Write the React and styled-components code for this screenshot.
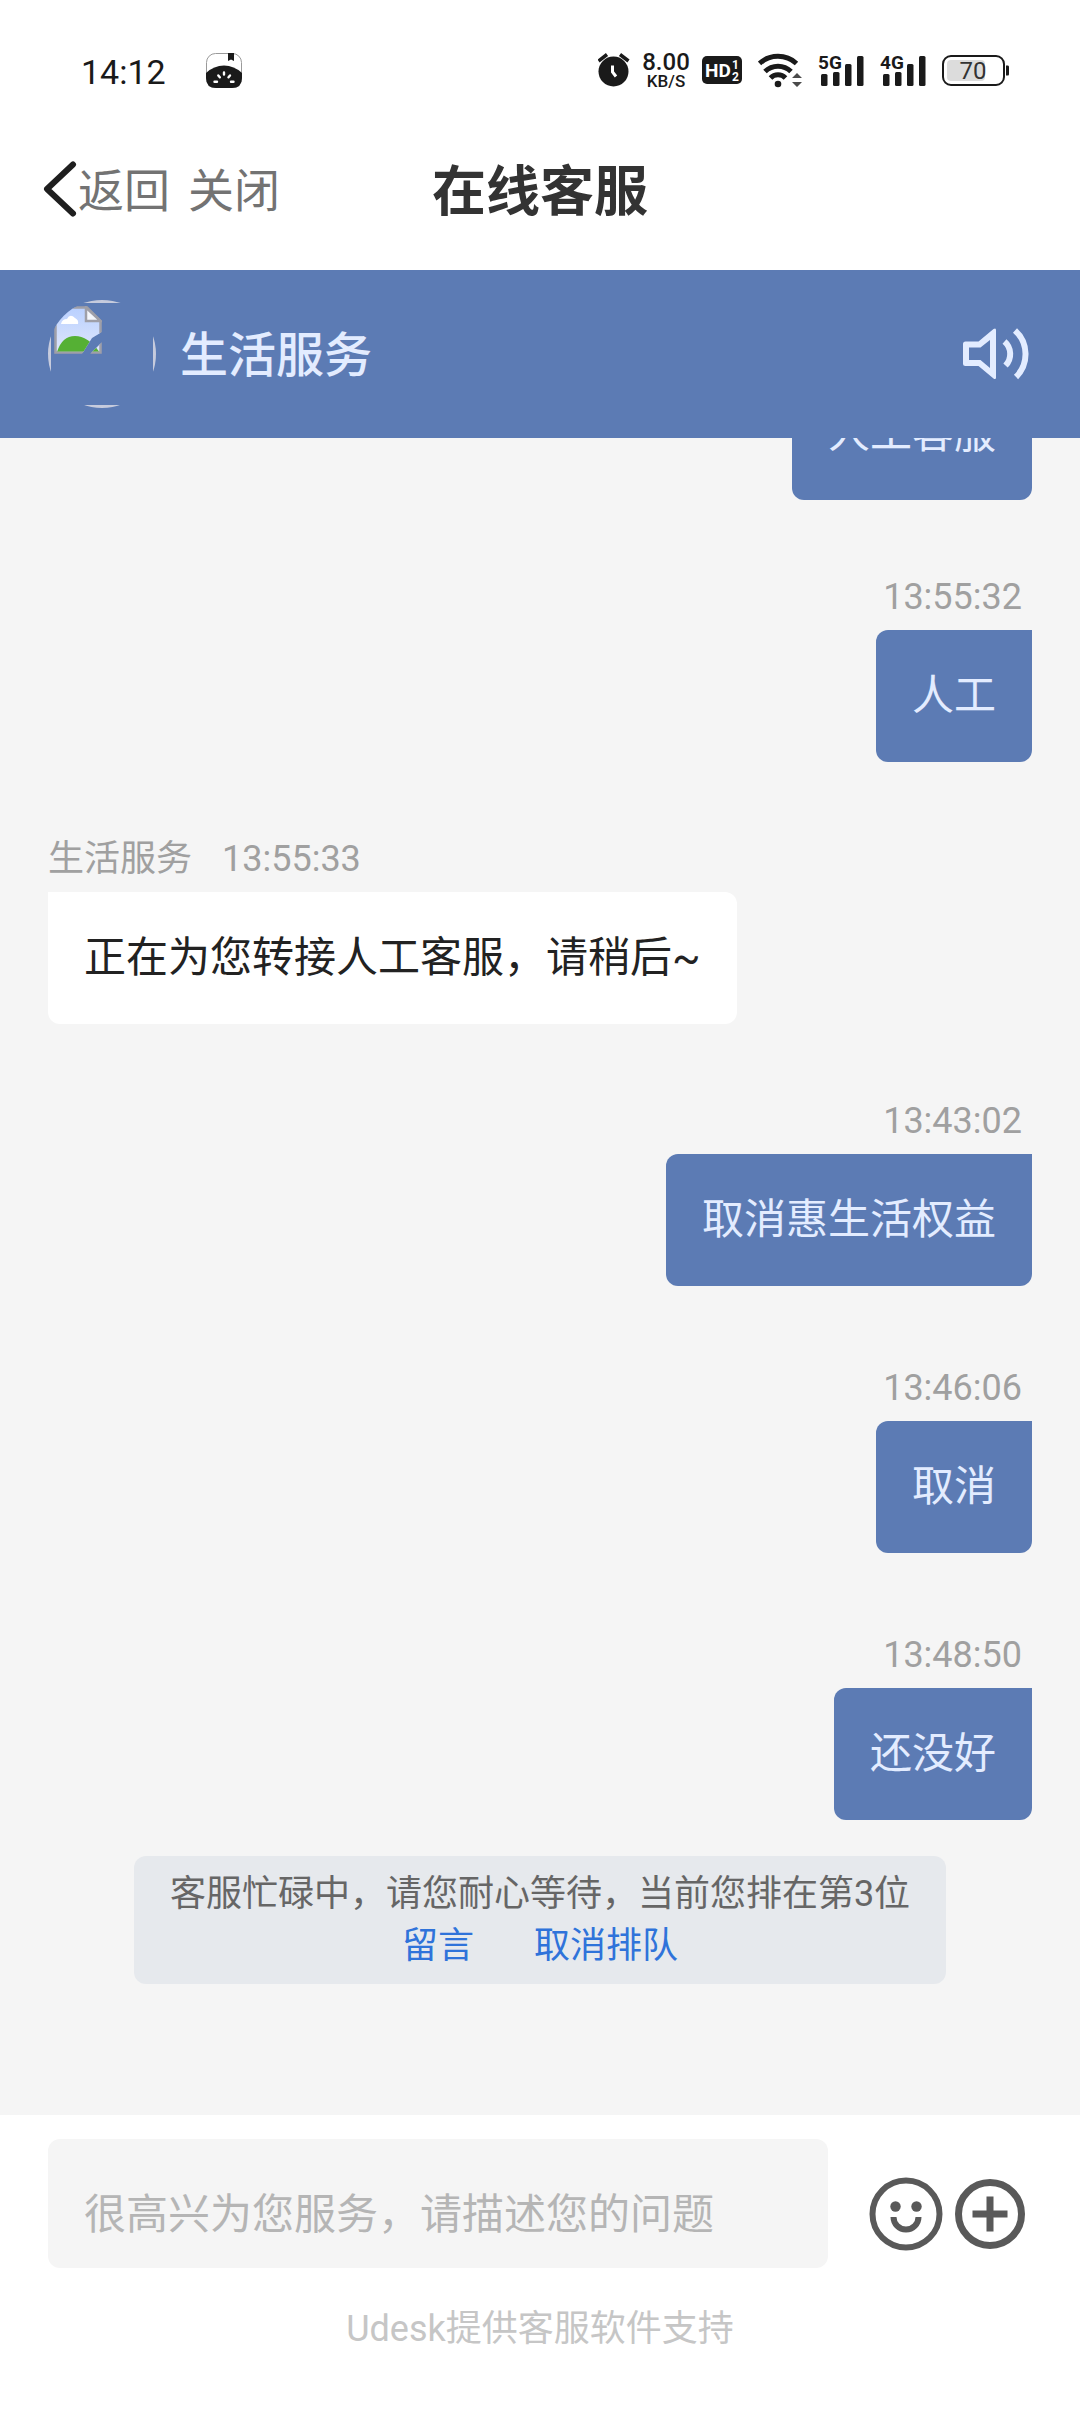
import React, { useState } from 'react';
import styled, { createGlobalStyle } from 'styled-components';

const colors = {
  primary: '#5c7bb4',
  onPrimary: '#e3ecff',
  background: '#f5f5f5',
  surface: '#ffffff',
  ink: '#1a1a1a',
  text: '#222222',
  muted: '#a0a0a0',
  link: '#2f73da'
};

const GlobalStyle = createGlobalStyle`
  * {
    box-sizing: border-box;
  }

  body {
    margin: 0;
    background: ${colors.surface};
    font-family: Roboto, 'Noto Sans CJK SC', sans-serif;
    color: ${colors.text};
  }

  button,
  textarea {
    font: inherit;
    border: none;
    background: none;
    padding: 0;
    margin: 0;
  }

  svg {
    display: block;
    flex: none;
  }
`;

const Page = styled.div`
  height: 100vh;
  display: flex;
  flex-direction: column;
`;

const StatusBar = styled.div`
  height: 140px;
  flex: none;
  display: flex;
  align-items: center;
  justify-content: space-between;
  padding: 0 71px 0 81px;
  color: ${colors.ink};
`;

const StatusGroup = styled.div`
  display: flex;
  align-items: center;
  gap: ${props => props.$gap}px;
`;

const Clock = styled.span`
  padding-top: 4px;
  font-size: 34px;
  line-height: 48px;
`;

const NetSpeed = styled.div`
  width: 52px;
  display: flex;
  flex-direction: column;
  align-items: center;
  font-weight: 500;
`;

const NetValue = styled.span`
  font-size: 24px;
  line-height: 22px;
`;

const NetUnit = styled.span`
  font-size: 17px;
  line-height: 17px;
`;

const NavBar = styled.nav`
  height: 130px;
  flex: none;
  display: grid;
  grid-template-columns: 1fr auto 1fr;
  align-items: center;
  padding: 0 42px 28px;
`;

const NavActions = styled.div`
  display: flex;
  align-items: center;
  gap: 18px;
`;

const NavButton = styled.button`
  display: flex;
  align-items: center;
  font-size: 46px;
  line-height: 60px;
  color: #737373;
  cursor: pointer;
`;

const PageTitle = styled.h1`
  margin: 0;
  padding-top: 4px;
  font-size: 54px;
  line-height: 60px;
  font-weight: 700;
  color: #333333;
`;

const AgentBar = styled.header`
  height: 168px;
  flex: none;
  display: flex;
  align-items: center;
  gap: 24px;
  padding: 0 51px 0 48px;
  background: ${colors.primary};
  color: ${colors.onPrimary};
`;

const AgentName = styled.h2`
  flex: 1;
  margin: 0;
  padding-top: 4px;
  font-size: 48px;
  line-height: 60px;
  font-weight: 500;
`;

const SoundButton = styled.button`
  color: inherit;
  cursor: pointer;
`;

// column-reverse keeps the newest message in view
const ChatScroll = styled.main`
  flex: 1;
  min-height: 0;
  display: flex;
  flex-direction: column-reverse;
  overflow-y: auto;
  scrollbar-width: none;
  background: ${colors.background};
`;

const ChatList = styled.div`
  display: flex;
  flex-direction: column;
  padding: 0 48px 131px;
`;

const Message = styled.div`
  display: flex;
  flex-direction: column;
  align-items: ${props => (props.$mine ? 'flex-end' : 'flex-start')};
  margin-bottom: ${props => props.$space}px;
`;

const Meta = styled.div`
  display: flex;
  gap: 30px;
  margin-bottom: 6px;
  padding-right: 10px;
  font-size: 36px;
  line-height: 54px;
  color: ${colors.muted};
`;

const Bubble = styled.div`
  padding: 33px 36px;
  font-size: 42px;
  line-height: 66px;
  color: ${props => (props.$mine ? colors.onPrimary : colors.text)};
  background: ${props => (props.$mine ? colors.primary : colors.surface)};
  border-radius: ${props => (props.$mine ? '12px 0 12px 12px' : '0 12px 12px 12px')};
`;

const QueueNotice = styled.div`
  align-self: center;
  padding: 12px 36px;
  border-radius: 12px;
  background: #e6e9ed;
  font-size: 36px;
  line-height: 52px;
  text-align: center;
  color: #666666;
`;

const QueueActions = styled.div`
  display: flex;
  justify-content: center;
  gap: 60px;
`;

const QueueLink = styled.a`
  color: ${colors.link};
  text-decoration: none;
`;

const Composer = styled.footer`
  flex: none;
  padding: 24px 48px 56px;
  background: ${colors.surface};
`;

const ComposerRow = styled.div`
  display: flex;
  align-items: flex-end;
`;

const MessageInput = styled.textarea`
  flex: 1;
  min-width: 0;
  height: 129px;
  margin-right: 36px;
  padding: 44px 36px 22px;
  border-radius: 12px;
  background: ${colors.background};
  font-size: 42px;
  line-height: 63px;
  color: ${colors.text};
  resize: none;
  outline: none;
  overflow: hidden;

  &::placeholder {
    color: #b5b5b5;
    opacity: 1;
  }
`;

const IconButton = styled.button`
  width: 84px;
  height: 84px;
  margin-bottom: 12px;
  display: flex;
  align-items: center;
  justify-content: center;
  color: #595959;
  cursor: pointer;
`;

const PoweredBy = styled.p`
  margin: 34px 0 0;
  font-size: 36px;
  line-height: 54px;
  text-align: center;
  color: #c6c6c6;
`;

const AppBadgeIcon = () => (
  <svg width="36" height="35" viewBox="0 0 36 35">
    <rect x="0.5" y="0.5" width="35" height="34" rx="9" fill="#fff" stroke="#9a9a9a" />
    <path d="M0 20Q8 12.500 18 12.500T36 20V25Q36 35 26 35H10Q0 35 0 25Z" fill="#1a1a1a" />
    <path d="M22 0H28V8L25 6.500L22 8Z" fill="#1a1a1a" />
    <g stroke="#fff" strokeWidth="2.400" strokeLinecap="round">
      <path d="M8.500 28.700H11M12.300 22.500L13.800 24.300M18 19.500V21.500M24 22.500L22.500 24.300M25 28.700H27.500" />
    </g>
  </svg>
);

const AlarmIcon = () => (
  <svg width="32" height="34" viewBox="0 0 32 34" fill="none">
    <circle cx="15.500" cy="18.500" r="15" fill="#1a1a1a" />
    <path d="M0.500 8L9 1.500M22 1.500L30.500 8" stroke="#1a1a1a" strokeWidth="3.500" />
    <path d="M14.500 12.500V19L18 23.500" stroke="#fff" strokeWidth="3" />
  </svg>
);

const HdIcon = () => (
  <svg width="40" height="28" viewBox="0 0 40 28" fill="#fff" fontFamily="Roboto" fontWeight="700">
    <rect width="40" height="28" rx="5" fill="#1a1a1a" />
    <text x="3" y="21" fontSize="19">HD</text>
    <text x="30" y="13" fontSize="12">1</text>
    <text x="30" y="25" fontSize="12">2</text>
  </svg>
);

const WifiIcon = () => (
  <svg width="44" height="35" viewBox="0 0 44 35" fill="none">
    <g stroke="#1a1a1a" strokeWidth="5">
      <path d="M1.500 10.500A27.500 27.500 0 0 1 38.500 10.500" />
      <path d="M7 18.500A18.500 18.500 0 0 1 33 18.500" />
      <path d="M12.500 25A10.500 10.500 0 0 1 27.500 25" />
    </g>
    <circle cx="20" cy="31" r="3.300" fill="#1a1a1a" />
    <path d="M34 25L39 20L44 25ZM34 29L39 34L44 29Z" fill="#4a4a4a" />
  </svg>
);

const SignalIcon = ({ label }) => (
  <svg width="46" height="41" viewBox="0 -4 46 41" fill="#1a1a1a">
    <text x="0" y="15" fontFamily="Roboto" fontWeight="700" fontSize="19">{label}</text>
    <rect x="3" y="20" width="6.500" height="12" rx="1.500" />
    <rect x="15" y="18" width="6.500" height="14" rx="1.500" />
    <rect x="27" y="10" width="6.500" height="22" rx="1.500" />
    <rect x="39" y="2" width="6.500" height="30" rx="1.500" />
  </svg>
);

const BatteryIcon = ({ level }) => (
  <svg width="67" height="31" viewBox="0 0 67 31">
    <rect x="1" y="1" width="61" height="29" rx="8" fill="#fff" stroke="#1a1a1a" strokeWidth="2" />
    <rect x="5" y="5" width="38" height="21" rx="4" fill="#dcdcdc" />
    <path d="M64 10.500H66Q67 10.500 67 12V19Q67 20.500 66 20.500H64Z" fill="#1a1a1a" />
    <text x="31" y="24" fontFamily="Roboto" fontSize="24" textAnchor="middle" fill="#333">{level}</text>
  </svg>
);

const BackIcon = () => (
  <svg width="36" height="60" viewBox="0 0 36 60" fill="none">
    <path d="M31 3.500L5 28L31 52.500" stroke="#1f1f1f" strokeWidth="6" strokeLinecap="round" strokeLinejoin="round" />
  </svg>
);

const BrokenAvatar = () => (
  <svg width="108" height="108" viewBox="0 0 108 108" role="img" aria-label="avatar">
    <defs>
      <clipPath id="avatar-round">
        <circle cx="54" cy="54" r="54" />
      </clipPath>
      <clipPath id="avatar-torn">
        <path d="M6 6H54V32L44 38L34 54H6ZM54 42V54H42Z" />
      </clipPath>
      <linearGradient id="avatar-sky" x1="0" y1="0" x2="0" y2="1">
        <stop offset="0" stopColor="#b9d0ff" />
        <stop offset="1" stopColor="#dfe6fb" />
      </linearGradient>
    </defs>
    <circle cx="54" cy="54" r="54" fill="#c6cbdd" />
    <rect x="3" y="3" width="102" height="102" fill={colors.primary} />
    <g clipPath="url(#avatar-round)">
      <g clipPath="url(#avatar-torn)">
        <path d="M7.500 7.500H39L52.500 21V52.500H7.500Z" fill="url(#avatar-sky)" stroke="#9f9fa8" strokeWidth="2.500" />
        <path d="M13 24Q14 19 19 19Q22 13 27 18Q31 20 30 24Z" fill="#fff" />
        <path d="M9 52Q14 36 27 36Q40 36 51 51.500H9Z" fill="#55b034" />
        <path d="M38 7.500V21H52.500Z" fill="#f4f6fb" stroke="#9f9fa8" strokeWidth="2.500" />
      </g>
    </g>
  </svg>
);

const SoundIcon = () => (
  <svg width="66" height="52" viewBox="0 0 66 52" fill="none">
    <path
      fillRule="evenodd"
      fill="currentColor"
      d="M2.500 13.500H15.500L30.500 1Q33 -0.500 33 2V49.500Q33 52 30.500 50.500L15.500 38H2.500Q0 38 0 35.500V16Q0 13.500 2.500 13.500ZM6 19.500V32H17.500L27 40V12L17.500 19.500Z"
    />
    <path d="M41.500 13.500A16.500 16.500 0 0 1 42.500 37.500" stroke="currentColor" strokeWidth="6" />
    <path d="M52 2.500A32 32 0 0 1 53 49" stroke="currentColor" strokeWidth="6" />
  </svg>
);

const SmileIcon = () => (
  <svg width="74" height="74" viewBox="-37 -37 74 74" fill="none" stroke="currentColor">
    <circle r="33.500" strokeWidth="6" />
    <circle cx="-10.500" cy="-7.500" r="5.200" fill="currentColor" stroke="none" />
    <circle cx="10.500" cy="-7.500" r="5.200" fill="currentColor" stroke="none" />
    <path d="M-12.500 3A12.500 12.500 0 0 0 12.500 3" strokeWidth="6" />
  </svg>
);

const PlusIcon = () => (
  <svg width="70" height="70" viewBox="-35 -35 70 70" fill="none" stroke="currentColor" strokeWidth="7">
    <circle r="31.500" />
    <path d="M-17.500 0H17.500M0 -17.500V17.500" />
  </svg>
);

const messages = [
  { id: 1, mine: true, text: '人工客服', space: 70 },
  { id: 2, mine: true, time: '13:55:32', text: '人工', space: 70 },
  { id: 3, name: '生活服务', time: '13:55:33', text: '正在为您转接人工客服，请稍后~', space: 70 },
  { id: 4, mine: true, time: '13:43:02', text: '取消惠生活权益', space: 75 },
  { id: 5, mine: true, time: '13:46:06', text: '取消', space: 75 },
  { id: 6, mine: true, time: '13:48:50', text: '还没好', space: 36 }
];

const App = () => {
  const [draft, setDraft] = useState('');

  return (
    <Page lang="zh-CN">
      <GlobalStyle />
      <StatusBar>
        <StatusGroup $gap={40}>
          <Clock>14:12</Clock>
          <AppBadgeIcon />
        </StatusGroup>
        <StatusGroup $gap={16}>
          <StatusGroup $gap={10}>
            <AlarmIcon />
            <NetSpeed>
              <NetValue>8.00</NetValue>
              <NetUnit>KB/S</NetUnit>
            </NetSpeed>
            <HdIcon />
          </StatusGroup>
          <WifiIcon />
          <SignalIcon label="5G" />
          <SignalIcon label="4G" />
          <BatteryIcon level={70} />
        </StatusGroup>
      </StatusBar>

      <NavBar>
        <NavActions>
          <NavButton type="button">
            <BackIcon />
            返回
          </NavButton>
          <NavButton type="button">关闭</NavButton>
        </NavActions>
        <PageTitle>在线客服</PageTitle>
      </NavBar>

      <AgentBar>
        <BrokenAvatar />
        <AgentName>生活服务</AgentName>
        <SoundButton type="button" aria-label="声音">
          <SoundIcon />
        </SoundButton>
      </AgentBar>

      <ChatScroll>
        <ChatList>
          {messages.map(message => (
            <Message key={message.id} $mine={message.mine} $space={message.space}>
              {message.time && (
                <Meta>
                  {message.name && <span>{message.name}</span>}
                  <time>{message.time}</time>
                </Meta>
              )}
              <Bubble $mine={message.mine}>{message.text}</Bubble>
            </Message>
          ))}
          <QueueNotice>
            客服忙碌中，请您耐心等待，当前您排在第3位
            <QueueActions>
              <QueueLink href="#message">留言</QueueLink>
              <QueueLink href="#cancel">取消排队</QueueLink>
            </QueueActions>
          </QueueNotice>
        </ChatList>
      </ChatScroll>

      <Composer>
        <ComposerRow>
          <MessageInput
            rows={1}
            aria-label="消息"
            placeholder="很高兴为您服务，请描述您的问题"
            value={draft}
            onChange={e => setDraft(e.target.value)}
          />
          <IconButton type="button" aria-label="表情">
            <SmileIcon />
          </IconButton>
          <IconButton type="button" aria-label="更多">
            <PlusIcon />
          </IconButton>
        </ComposerRow>
        <PoweredBy>Udesk提供客服软件支持</PoweredBy>
      </Composer>
    </Page>
  );
};

export default App;
